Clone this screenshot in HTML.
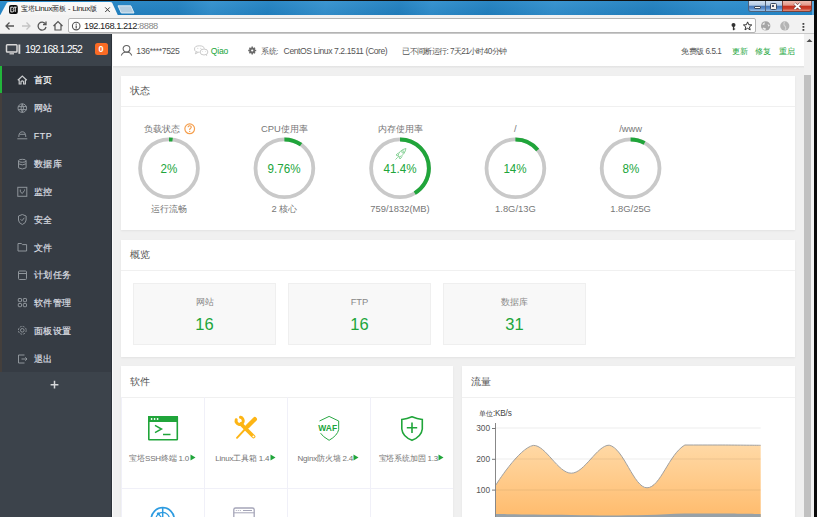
<!DOCTYPE html>
<html><head><meta charset="utf-8">
<style>
*{margin:0;padding:0;box-sizing:border-box}
html,body{width:817px;height:517px;overflow:hidden;background:#f0f0f0;font-family:"Liberation Sans",sans-serif}
.a{position:absolute}
.t{position:absolute;white-space:nowrap;line-height:1}
</style></head><body>
<!-- window chrome -->
<div class="a" style="left:0;top:0;width:817px;height:1px;background:#111"></div>
<div class="a" style="left:0;top:1px;width:814px;height:14px;background:linear-gradient(#2e8ecd,#2282c2)"></div>
<div class="a" style="left:0;top:1px;width:814px;height:14px;background:linear-gradient(100deg,rgba(0,0,0,0) 0%,rgba(0,30,60,.07) 22%,rgba(255,255,255,.06) 26%,rgba(0,30,60,.06) 33%,rgba(255,255,255,.07) 40%,rgba(0,30,60,.08) 49%,rgba(255,255,255,.05) 53%,rgba(0,30,60,.07) 60%,rgba(255,255,255,.06) 68%,rgba(0,30,60,.08) 80%,rgba(255,255,255,.04) 88%,rgba(0,0,0,0) 100%)"></div>
<div class="a" style="left:0;top:14.5px;width:814px;height:1px;background:rgba(10,60,100,.35)"></div>
<div class="a" style="left:814px;top:0;width:3px;height:517px;background:#0a0a0a"></div>
<!-- tab -->
<svg class="a" style="left:0;top:0" width="140" height="16"><defs><linearGradient id="tabg" x1="0" y1="0" x2="0" y2="1"><stop offset="0" stop-color="#fbfbfb"/><stop offset="1" stop-color="#f4f4f4"/></linearGradient></defs><path d="M0 15.5 L7 2.5 Q8 2 9 2 L110 2 Q111 2 112 2.5 L118 15.5 Z" fill="url(#tabg)"/><path d="M118 5.8 L130.8 5.8 L134 13 L121.3 13 Z" fill="#b3cde0" stroke="#e6f0f7" stroke-width="0.9"/></svg>
<svg class="a" style="left:9.4px;top:4.6px" width="9" height="9.2"><rect x="0" y="0" width="8.8" height="9" rx="2" fill="#0c0c0c"/><path d="M1.8 2.2 H3.6 Q4.6 2.2 4.6 3.4 Q4.6 4.3 3.8 4.5 Q4.8 4.7 4.8 5.7 Q4.8 6.9 3.6 6.9 H1.8 Z M4.9 2.2 H7.6 M6.25 2.2 V6.9" fill="none" stroke="#f4f4f4" stroke-width="0.95"/></svg>

<div class="t" style="left:20.8px;top:5.3px;font-size:7.4px;color:#222;letter-spacing:-0.05px">宝塔<span style="font-size:8px;letter-spacing:-0.35px">Linux</span>面板 - <span style="font-size:8px;letter-spacing:-0.35px">Linux</span>版</div>
<svg class="a" style="left:103px;top:5px" width="9" height="9"><path d="M2.2 2.4 L6.8 7 M6.8 2.4 L2.2 7" stroke="#333" stroke-width="0.95"/></svg>
<!-- window controls -->
<div class="a" style="left:747.5px;top:1px;width:35px;height:11px;background:linear-gradient(#d2e0f0 0%,#b6cce6 42%,#4677b6 52%,#5a8ccb 75%,#9cc2e8 100%);border:1px solid #50627a;border-top:none;border-radius:0 0 0 3px"></div>
<div class="a" style="left:765px;top:1px;width:1px;height:10.5px;background:#50627a"></div>
<div class="a" style="left:782px;top:1px;width:29.5px;height:11px;background:linear-gradient(#efbcb0 0%,#e3988a 42%,#c4301e 52%,#cc3f2c 75%,#e08f7c 100%);border:1px solid #7a4038;border-top:none;border-radius:0 0 3px 0"></div>
<div class="a" style="left:753.5px;top:6.2px;width:7.5px;height:3px;background:#fbf6f0;border:0.5px solid #3a4a60;border-radius:1px"></div>
<div class="a" style="left:769.5px;top:3px;width:7px;height:6.5px;background:#f4f0ea;border:0.5px solid #3a4a60;border-radius:1.5px"></div>
<div class="a" style="left:772.2px;top:5.4px;width:1.8px;height:1.8px;background:#1a2a50;border-radius:50%"></div>
<svg class="a" style="left:792px;top:1px" width="11" height="11"><path d="M2.5 2.5 L8.5 8 M8.5 2.5 L2.5 8" stroke="#5a3030" stroke-width="3"/><path d="M2.5 2.5 L8.5 8 M8.5 2.5 L2.5 8" stroke="#fff" stroke-width="1.7"/></svg>
<div class="a" style="left:811.5px;top:1px;width:2.5px;height:14px;background:#5aa7dc"></div>
<!-- toolbar -->
<div class="a" style="left:0;top:15px;width:814px;height:19px;background:#f2f2f2"></div>
<div class="a" style="left:0;top:33px;width:814px;height:1px;background:#c9c9c9"></div>
<svg class="a" style="left:0;top:16.2px" width="68" height="19">
<g fill="none" stroke="#555" stroke-width="1.3"><path d="M6 10 H14 M9.5 6.5 L6 10 L9.5 13.5"/></g>
<g fill="none" stroke="#c4c4c4" stroke-width="1.3"><path d="M22 10 H30 M26.5 6.5 L30 10 L26.5 13.5"/></g>
<g fill="none" stroke="#555" stroke-width="1.3"><path d="M45.5 8 A4 4 0 1 0 46 11"/><path d="M46 5.5 V8.5 H43" /></g>
<g fill="none" stroke="#555" stroke-width="1.2"><path d="M53.5 10 L58 5.5 L62.5 10 M55 9 V14 H61 V9"/></g>
</svg>
<div class="a" style="left:68.4px;top:18.2px;width:687.4px;height:15.2px;background:#fff;border:1px solid #b4b4b4;border-radius:2px"></div>
<svg class="a" style="left:70px;top:20px" width="13" height="13"><circle cx="6.2" cy="6.1" r="3.8" fill="none" stroke="#555" stroke-width="1.1"/><circle cx="6.2" cy="4.2" r="0.6" fill="#444"/><path d="M6.2 5.5 V8.4" stroke="#444" stroke-width="1.1"/></svg>

<div class="t" style="left:84px;top:22px;font-size:9.3px;color:#222;letter-spacing:-0.5px">192.168.1.212<span style="color:#888">:8888</span></div>
<svg class="a" style="left:728px;top:20px" width="90" height="14">
<g fill="#333"><circle cx="5.5" cy="5" r="2"/><rect x="4.9" y="5" width="1.3" height="5.2"/><rect x="4.9" y="8.5" width="2.3" height="1"/></g>
<path d="M19.60 1.90 L20.75 4.72 L23.78 4.94 L21.45 6.90 L22.19 9.86 L19.60 8.25 L17.01 9.86 L17.75 6.90 L15.42 4.94 L18.45 4.72 Z" fill="none" stroke="#333" stroke-width="1"/>
<circle cx="37.7" cy="5.9" r="4.7" fill="#a6a6a6"/><path d="M34.2 4.5 Q35.5 2.3 37 2.6 L36.2 5 Z M39.5 4 L41.8 5.2 L40.5 6.8 Z M35.5 7.5 L38 8.5 L37.3 10.3 Q35 9.8 34.5 8.3 Z" fill="#eee"/>
<circle cx="56.8" cy="5.9" r="4.6" fill="#b4b4b4"/><path d="M56.5 1.8 Q55 5 57.3 6.5 Q58.5 8 57 10" stroke="#d6d6d6" stroke-width="1.1" fill="none"/>
<g fill="#444"><rect x="74.5" y="3" width="1.8" height="1.8"/><rect x="74.5" y="6" width="1.8" height="1.8"/><rect x="74.5" y="9" width="1.8" height="1.8"/></g>
</svg>

<!-- sidebar -->
<div class="a" style="left:0;top:34px;width:112px;height:483px;background:#3c434b"></div>
<div class="a" style="left:0;top:66px;width:112px;height:306px;background:#363c44"></div>
<div class="a" style="left:0;top:66px;width:112px;height:27px;background:#2c3138"></div>
<div class="a" style="left:0;top:66px;width:1.8px;height:27px;background:#22b53b"></div>
<div class="a" style="left:0;top:93px;width:1.8px;height:279px;background:#443f3c"></div>
<div class="a" style="left:112px;top:34px;width:1.2px;height:483px;background:#fafafa"></div>
<div class="a" style="left:110.8px;top:34px;width:1.2px;height:483px;background:#2c3239"></div>

<!-- sidebar content -->
<svg class="a" style="left:5px;top:43px" width="17" height="12">
<rect x="1.5" y="1.7" width="10.5" height="7.3" rx="0.8" fill="none" stroke="#d8d8d8" stroke-width="1.5"/>
<path d="M4.5 10.8 H9" stroke="#d8d8d8" stroke-width="1.2"/>
<rect x="13.4" y="1.5" width="1.9" height="9.3" fill="#d8d8d8"/>
</svg>
<div class="t" style="left:25px;top:44.5px;font-size:10.4px;color:#fff;letter-spacing:-0.72px">192.168.1.252</div>
<div class="a" style="left:95.3px;top:42.8px;width:12.3px;height:12.3px;background:#fa6b24;border-radius:2.5px"></div>
<div class="t" style="left:98.6px;top:45px;font-size:9px;font-weight:bold;color:#fff">0</div>

<div class="t" style="left:33.8px;top:76.4px;font-size:8.9px;letter-spacing:0.5px;-webkit-text-stroke:0.2px #fff;color:#fff">首页</div>
<div class="t" style="left:33.8px;top:104.3px;font-size:8.9px;letter-spacing:0.5px;-webkit-text-stroke:0.2px #dcdfe2;color:#dcdfe2">网站</div>
<div class="t" style="left:33.8px;top:132.1px;font-size:8.9px;letter-spacing:0.5px;-webkit-text-stroke:0.2px #dcdfe2;color:#dcdfe2">FTP</div>
<div class="t" style="left:33.8px;top:160.0px;font-size:8.9px;letter-spacing:0.5px;-webkit-text-stroke:0.2px #dcdfe2;color:#dcdfe2">数据库</div>
<div class="t" style="left:33.8px;top:187.8px;font-size:8.9px;letter-spacing:0.5px;-webkit-text-stroke:0.2px #dcdfe2;color:#dcdfe2">监控</div>
<div class="t" style="left:33.8px;top:215.7px;font-size:8.9px;letter-spacing:0.5px;-webkit-text-stroke:0.2px #dcdfe2;color:#dcdfe2">安全</div>
<div class="t" style="left:33.8px;top:243.5px;font-size:8.9px;letter-spacing:0.5px;-webkit-text-stroke:0.2px #dcdfe2;color:#dcdfe2">文件</div>
<div class="t" style="left:33.8px;top:271.4px;font-size:8.9px;letter-spacing:0.5px;-webkit-text-stroke:0.2px #dcdfe2;color:#dcdfe2">计划任务</div>
<div class="t" style="left:33.8px;top:299.2px;font-size:8.9px;letter-spacing:0.5px;-webkit-text-stroke:0.2px #dcdfe2;color:#dcdfe2">软件管理</div>
<div class="t" style="left:33.8px;top:327.1px;font-size:8.9px;letter-spacing:0.5px;-webkit-text-stroke:0.2px #dcdfe2;color:#dcdfe2">面板设置</div>
<div class="t" style="left:33.8px;top:354.9px;font-size:8.9px;letter-spacing:0.5px;-webkit-text-stroke:0.2px #dcdfe2;color:#dcdfe2">退出</div>
<svg class="a" style="left:0;top:66px" width="40" height="310">
<path d="M17.8 14.3 L22.3 10 L26.8 14.3 M19.2 13 V18 H21 V15.6 Q22.3 14.3 23.6 15.6 V18 H25.4 V13" fill="none" stroke="#c9cbcd" stroke-width="1.2"/>
<g fill="none" stroke="#8f959b" stroke-width="1">
<circle cx="22.3" cy="42.1" r="4.3"/><path d="M18 40.6 H26.6 M18 43.6 H26.6 M22.3 37.8 Q19.8 42.1 22.3 46.4 Q24.8 42.1 22.3 37.8"/>
<path d="M18.8 71 Q18.8 65.8 22.3 65.8 Q25.8 65.8 25.8 71 M19.5 68.3 H25.1 M17.3 72.8 H27.3"/>
<ellipse cx="22.3" cy="94.8" rx="3.8" ry="1.5"/><path d="M18.5 94.8 V101.8 Q22.3 104.2 26.1 101.8 V94.8 M18.5 97.8 Q22.3 100 26.1 97.8"/>
<rect x="17.8" y="121.3" width="9" height="9"/><path d="M20.3 123.5 V125.8 L22.3 127.5 L24.5 124.5 V123.5"/>
<path d="M18.5 150 L22.3 148.5 L26.1 150 V154 Q26.1 157 22.3 158.5 Q18.5 157 18.5 154 Z"/><path d="M20.5 153.2 L22 154.7 L24.3 151.8"/>
<path d="M18 177.5 V185 H26.6 V178.6 H22.5 L21.3 177.5 Z"/>
<rect x="18.5" y="205" width="8" height="8.5" rx="1"/><path d="M18.5 207.5 H26.5"/>
<rect x="18.3" y="232.5" width="3.2" height="3.2" rx="0.6"/><rect x="23.3" y="232.5" width="3.2" height="3.2" rx="0.6"/><rect x="18.3" y="237.5" width="3.2" height="3.2" rx="0.6"/><rect x="23.3" y="237.5" width="3.2" height="3.2" rx="0.6"/>
<circle cx="22.3" cy="264.3" r="1.8"/><circle cx="22.3" cy="264.3" r="3.9" stroke-dasharray="1.9 1.15"/>
<path d="M24.5 289 H18.5 V297 H24.5 M21.5 293 H27 M25.3 291.3 L27 293 L25.3 294.7"/>
</g>
</svg>
<svg class="a" style="left:49px;top:379px" width="12" height="12"><path d="M5.5 1.8 V9.6 M1.6 5.7 H9.4" stroke="#d6d8da" stroke-width="1.5"/></svg>

<!-- header -->
<div class="a" style="left:113px;top:34px;width:691px;height:32px;background:#fff"></div>
<div class="a" style="left:113px;top:66px;width:691px;height:2px;background:linear-gradient(#e2e2e2,#ececec)"></div>
<svg class="a" style="left:120px;top:44px" width="140" height="14">
<g fill="none" stroke="#606060" stroke-width="1.05">
<circle cx="6.5" cy="4.8" r="3.4"/><path d="M1.3 11.5 Q2.5 8 6.5 8 Q10.5 8 11.7 11.5"/>
</g>
<g fill="none" stroke="#c4c4c4" stroke-width="0.9">
<path d="M79.5 8.3 Q74.5 8.3 74.5 5 Q74.5 1.8 79.3 1.8 Q84 1.8 84.3 4.6 M76.2 7.8 L75.3 9.8 L77.8 8.6"/>
<ellipse cx="84" cy="8" rx="3.9" ry="3"/><path d="M86 10.6 L86.8 11.8"/>
</g>
<g fill="#c4c4c4"><circle cx="77.8" cy="4.3" r="0.5"/><circle cx="80.8" cy="4.3" r="0.5"/><circle cx="82.6" cy="7.6" r="0.45"/><circle cx="85.4" cy="7.6" r="0.45"/></g>
<g fill="#6a6a6a"><circle cx="132.2" cy="6.5" r="3"/></g>
<g stroke="#6a6a6a" stroke-width="1.5"><path d="M132.2 2.5 V10.5 M128.2 6.5 H136.2 M129.4 3.7 L135 9.3 M135 3.7 L129.4 9.3"/></g>
<circle cx="132.2" cy="6.5" r="1.1" fill="#fff"/>
</svg>
<div class="t" style="left:136.3px;top:47px;font-size:8.6px;color:#555;letter-spacing:-0.33px">136****7525</div>
<div class="t" style="left:210.8px;top:47px;font-size:8.6px;color:#20a53a;letter-spacing:-0.2px">Qiao</div>
<div class="t" style="left:261.2px;top:48px;font-size:8px;color:#555;letter-spacing:-0.5px">系统:</div>
<div class="t" style="left:283.6px;top:47.2px;font-size:8.6px;color:#555;letter-spacing:-0.42px">CentOS Linux 7.2.1511 (Core)</div>
<div class="t" style="left:402.3px;top:48.2px;font-size:8.2px;color:#555;letter-spacing:-0.62px">已不间断运行: 7天21小时40分钟</div>
<div class="t" style="left:681px;top:48px;font-size:8.2px;color:#555;letter-spacing:-0.45px">免费版 6.5.1</div>
<div class="t" style="left:731.5px;top:48px;font-size:8px;color:#20a53a">更新</div>
<div class="t" style="left:755px;top:48px;font-size:8px;color:#20a53a">修复</div>
<div class="t" style="left:779px;top:48px;font-size:8px;color:#20a53a">重启</div>

<!-- scrollbar -->
<div class="a" style="left:804px;top:34px;width:10px;height:483px;background:#f1f1f1"></div>
<div class="a" style="left:804px;top:75px;width:7px;height:442px;background:#c1c1c1"></div>
<svg class="a" style="left:804px;top:36px" width="10" height="8"><path d="M2.5 6 L5.5 3 L8.5 6 Z" fill="#505050"/></svg>

<!-- status card -->
<div class="a" style="left:121px;top:76px;width:673.5px;height:154px;background:#fff;box-shadow:0 1px 2px rgba(0,0,0,.06)"></div>
<div class="a" style="left:121px;top:105.5px;width:673.5px;height:1px;background:#f0f0f0"></div>
<div class="t" style="left:130px;top:86px;font-size:10px;color:#555">状态</div>
<svg class="a" style="left:0;top:0" width="817" height="517">
<circle cx="169" cy="168.3" r="28.9" fill="none" stroke="#c9c9c9" stroke-width="3.8"/>
<circle cx="169" cy="168.3" r="28.9" fill="none" stroke="#20a53a" stroke-width="4" stroke-dasharray="3.63 181.58" transform="rotate(-90 169 168.3)"/>
<circle cx="284.4" cy="168.3" r="28.9" fill="none" stroke="#c9c9c9" stroke-width="3.8"/>
<circle cx="284.4" cy="168.3" r="28.9" fill="none" stroke="#20a53a" stroke-width="4" stroke-dasharray="17.72 181.58" transform="rotate(-90 284.4 168.3)"/>
<circle cx="400" cy="168.3" r="28.9" fill="none" stroke="#c9c9c9" stroke-width="3.8"/>
<circle cx="400" cy="168.3" r="28.9" fill="none" stroke="#20a53a" stroke-width="4" stroke-dasharray="75.18 181.58" transform="rotate(-90 400 168.3)"/>
<circle cx="515.4" cy="168.3" r="28.9" fill="none" stroke="#c9c9c9" stroke-width="3.8"/>
<circle cx="515.4" cy="168.3" r="28.9" fill="none" stroke="#20a53a" stroke-width="4" stroke-dasharray="25.42 181.58" transform="rotate(-90 515.4 168.3)"/>
<circle cx="630.6" cy="168.3" r="28.9" fill="none" stroke="#c9c9c9" stroke-width="3.8"/>
<circle cx="630.6" cy="168.3" r="28.9" fill="none" stroke="#20a53a" stroke-width="4" stroke-dasharray="14.53 181.58" transform="rotate(-90 630.6 168.3)"/>
</svg>
<div class="t" style="left:144px;top:124px;font-size:9.4px;color:#777">负载状态</div>
<div class="t" style="left:109px;width:120px;text-align:center;top:161.5px;font-size:13.5px;color:#20a53a;transform:scaleX(0.86)">2%</div>
<div class="t" style="left:109px;width:120px;text-align:center;top:204px;font-size:9.4px;color:#777">运行流畅</div>
<div class="t" style="left:224.39999999999998px;width:120px;text-align:center;top:124px;font-size:9.4px;color:#777">CPU使用率</div>
<div class="t" style="left:224.39999999999998px;width:120px;text-align:center;top:161.5px;font-size:13.5px;color:#20a53a;transform:scaleX(0.86)">9.76%</div>
<div class="t" style="left:224.39999999999998px;width:120px;text-align:center;top:204px;font-size:9.4px;color:#777">2 核心</div>
<div class="t" style="left:340px;width:120px;text-align:center;top:124px;font-size:9.4px;color:#777">内存使用率</div>
<div class="t" style="left:340px;width:120px;text-align:center;top:161.5px;font-size:13.5px;color:#20a53a;transform:scaleX(0.86)">41.4%</div>
<div class="t" style="left:340px;width:120px;text-align:center;top:204px;font-size:9.4px;color:#777">759/1832(MB)</div>
<div class="t" style="left:455.4px;width:120px;text-align:center;top:124px;font-size:9.4px;color:#777">/</div>
<div class="t" style="left:455.4px;width:120px;text-align:center;top:161.5px;font-size:13.5px;color:#20a53a;transform:scaleX(0.86)">14%</div>
<div class="t" style="left:455.4px;width:120px;text-align:center;top:204px;font-size:9.4px;color:#777">1.8G/13G</div>
<div class="t" style="left:570.6px;width:120px;text-align:center;top:124px;font-size:9.4px;color:#777">/www</div>
<div class="t" style="left:570.6px;width:120px;text-align:center;top:161.5px;font-size:13.5px;color:#20a53a;transform:scaleX(0.86)">8%</div>
<div class="t" style="left:570.6px;width:120px;text-align:center;top:204px;font-size:9.4px;color:#777">1.8G/25G</div>
<svg class="a" style="left:183px;top:122px" width="13" height="13"><circle cx="6.7" cy="6.8" r="4.85" fill="none" stroke="#f59f4e" stroke-width="1.2"/><path d="M5.1 5.3 Q5.1 3.7 6.7 3.7 Q8.3 3.7 8.3 5.1 Q8.3 6 7.3 6.5 Q6.7 6.9 6.7 7.7 V8" fill="none" stroke="#f39a45" stroke-width="1.1"/><circle cx="6.7" cy="9.4" r="0.65" fill="#f39a45"/></svg>
<svg class="a" style="left:393.3px;top:146px" width="16" height="16"><g fill="none" stroke="#7fce8e" stroke-width="0.9"><path d="M5 10 Q6 4 13 2.5 Q11.5 9.5 6 11 Z"/><path d="M5 10 L3 9 L5.5 6.8 M6 11 L7 13 L9.2 10.5 M4.7 11.3 L2.5 13.5"/><circle cx="9.8" cy="5.8" r="1.1"/></g></svg>

<div class="a" style="left:121px;top:240px;width:673.5px;height:117px;background:#fff;box-shadow:0 1px 2px rgba(0,0,0,.06)"></div>
<div class="a" style="left:121px;top:270px;width:673.5px;height:1px;background:#f0f0f0"></div>
<div class="t" style="left:130px;top:250px;font-size:10px;color:#555">概览</div>
<div class="a" style="left:133px;top:283px;width:143px;height:62px;background:#f8f8f8;border:1px solid #efefef"></div>
<div class="t" style="left:133px;width:143px;text-align:center;top:296.5px;font-size:9.4px;color:#888">网站</div>
<div class="t" style="left:133px;width:143px;text-align:center;top:315.5px;font-size:16.5px;color:#20a53a">16</div>
<div class="a" style="left:288px;top:283px;width:143px;height:62px;background:#f8f8f8;border:1px solid #efefef"></div>
<div class="t" style="left:288px;width:143px;text-align:center;top:296.5px;font-size:9.4px;color:#888">FTP</div>
<div class="t" style="left:288px;width:143px;text-align:center;top:315.5px;font-size:16.5px;color:#20a53a">16</div>
<div class="a" style="left:443px;top:283px;width:143px;height:62px;background:#f8f8f8;border:1px solid #efefef"></div>
<div class="t" style="left:443px;width:143px;text-align:center;top:296.5px;font-size:9.4px;color:#888">数据库</div>
<div class="t" style="left:443px;width:143px;text-align:center;top:315.5px;font-size:16.5px;color:#20a53a">31</div>

<div class="a" style="left:121px;top:366.2px;width:332px;height:160px;background:#fff;box-shadow:0 1px 2px rgba(0,0,0,.06)"></div>
<div class="a" style="left:121px;top:396.5px;width:332px;height:1px;background:#f0f0f0"></div>
<div class="t" style="left:130px;top:377px;font-size:10px;color:#555">软件</div>
<div class="a" style="left:121px;top:397px;width:1px;height:120px;background:#f0f0f8"></div>
<div class="a" style="left:204px;top:397px;width:1px;height:120px;background:#f0f0f8"></div>
<div class="a" style="left:287px;top:397px;width:1px;height:120px;background:#f0f0f8"></div>
<div class="a" style="left:370px;top:397px;width:1px;height:120px;background:#f0f0f8"></div>
<div class="a" style="left:121px;top:488px;width:332px;height:1px;background:#f0f0f8"></div>
<div class="t" style="left:121px;width:83px;text-align:center;top:454.2px;font-size:8px;color:#737373;letter-spacing:-0.2px">宝塔SSH终端 1.0<svg width="6" height="7" style="vertical-align:-0.5px;margin-left:0.5px"><path d="M0.5 0.5 L5.5 3.5 L0.5 6.5 Z" fill="#20a53a"/></svg></div>
<div class="t" style="left:204px;width:83px;text-align:center;top:454.2px;font-size:8px;color:#737373;letter-spacing:-0.2px">Linux工具箱 1.4<svg width="6" height="7" style="vertical-align:-0.5px;margin-left:0.5px"><path d="M0.5 0.5 L5.5 3.5 L0.5 6.5 Z" fill="#20a53a"/></svg></div>
<div class="t" style="left:287px;width:83px;text-align:center;top:454.2px;font-size:8px;color:#737373;letter-spacing:-0.2px">Nginx防火墙 2.4<svg width="6" height="7" style="vertical-align:-0.5px;margin-left:0.5px"><path d="M0.5 0.5 L5.5 3.5 L0.5 6.5 Z" fill="#20a53a"/></svg></div>
<div class="t" style="left:370px;width:83px;text-align:center;top:454.2px;font-size:8px;color:#737373;letter-spacing:-0.2px">宝塔系统加固 1.3<svg width="6" height="7" style="vertical-align:-0.5px;margin-left:0.5px"><path d="M0.5 0.5 L5.5 3.5 L0.5 6.5 Z" fill="#20a53a"/></svg></div>

<svg class="a" style="left:0;top:0" width="817" height="517">
<g>
<rect x="148.8" y="416.8" width="28.5" height="23" fill="none" stroke="#20a53a" stroke-width="1.6" rx="0.5"/>
<rect x="148" y="416" width="30" height="6" fill="#20a53a"/>
<circle cx="151.6" cy="419" r="0.9" fill="#fff"/><circle cx="154.6" cy="419" r="0.9" fill="#fff"/><circle cx="157.6" cy="419" r="0.9" fill="#fff"/>
<path d="M155 425.3 L161.5 429 L155 432.7" fill="none" stroke="#20a53a" stroke-width="1.5"/>
<path d="M163 434.5 H170.5" stroke="#20a53a" stroke-width="1.5"/>
</g>
<g fill="none" stroke="#fdb515" stroke-linecap="round">
<path d="M241 424 L253.5 436.5" stroke-width="3.8"/>
<path d="M236.2 419.8 A3.6 3.6 0 1 0 240.5 417.3" stroke-width="3"/>
<path d="M254.8 419.2 L247.5 426.5" stroke-width="4.4"/>
<path d="M247.5 426.5 L237 437.8" stroke-width="1.9"/>
</g>
<circle cx="253.4" cy="436.4" r="0.95" fill="#fff"/>
<path d="M319.5 421 L329.1 416.4 L338.7 421 L338.7 429.5 Q337.5 435.5 329.1 440.3 Q322.5 436.5 320.6 433.2" fill="none" stroke="#2aa845" stroke-width="1"/>
<text x="318.3" y="431.3" font-family="Liberation Sans" font-size="8.8" font-weight="bold" fill="#20a53a" textLength="18.8" lengthAdjust="spacingAndGlyphs">WAF</text>
<path d="M401.8 419.5 Q407 419 412 416.8 Q417 419 422.3 419.5 V429 Q421.5 436.5 412 440.3 Q402.5 436.5 401.8 429 Z" fill="none" stroke="#20a53a" stroke-width="1.6"/>
<path d="M412 422.5 V433 M406.8 427.7 H417.2" stroke="#20a53a" stroke-width="1.6"/>
<circle cx="162.7" cy="519.2" r="11.5" fill="none" stroke="#2d9be0" stroke-width="1.7"/>
<circle cx="162.7" cy="519.2" r="6.8" fill="none" stroke="#2d9be0" stroke-width="1.3"/>
<path d="M162.7 507.7 V519" stroke="#2d9be0" stroke-width="1.5"/>
<circle cx="158.3" cy="513.8" r="1.5" fill="#2d9be0"/>
<path d="M158.3 513.8 L162.7 519" stroke="#2d9be0" stroke-width="1.2"/>
<rect x="233.8" y="508" width="20.4" height="14" rx="1.8" fill="none" stroke="#a5a5b8" stroke-width="1.3"/>
<path d="M233.8 512.8 H254.2" stroke="#a5a5b8" stroke-width="1"/>
<g fill="#a5a5b8"><circle cx="236.3" cy="510.5" r="0.6"/><circle cx="238.3" cy="510.5" r="0.6"/><circle cx="240.3" cy="510.5" r="0.6"/></g>
<path d="M243 510.5 H252" stroke="#a5a5b8" stroke-width="1"/>
</svg>

<div class="a" style="left:462px;top:366.2px;width:332.5px;height:160px;background:#fff;box-shadow:0 1px 2px rgba(0,0,0,.06)"></div>
<div class="a" style="left:462px;top:396.5px;width:332.5px;height:1px;background:#f0f0f0"></div>
<div class="t" style="left:471px;top:377px;font-size:10px;color:#555">流量</div>
<div class="t" style="left:479px;top:410.1px;font-size:7.4px;color:#444">单位<span style="font-size:8.2px;letter-spacing:-0.2px">:KB/s</span></div>
<div class="t" style="left:460px;width:30px;text-align:right;top:424px;font-size:8.3px;color:#555">300</div>
<div class="t" style="left:460px;width:30px;text-align:right;top:455px;font-size:8.3px;color:#555">200</div>
<div class="t" style="left:460px;width:30px;text-align:right;top:486px;font-size:8.3px;color:#555">100</div>
<svg class="a" style="left:0;top:0" width="817" height="517">
<defs><linearGradient id="og" x1="0" y1="0" x2="0" y2="1"><stop offset="0" stop-color="#ffd9a6"/><stop offset="1" stop-color="#ffb866"/></linearGradient></defs>

<path d="M495.5 485.5 C495.5 485.5 519.1 447.7 533.4 445.4 C545.6 445.0 558.0 473.2 571.3 473.2 C584.5 473.2 597.2 445.0 609.2 445.2 C623.7 448.0 633.8 487.8 647.0 487.8 C660.3 487.8 669.0 454.0 684.9 445.0 C695.5 445.0 709.6 445.0 722.8 445.0 C736.1 445.1 760.7 445.3 760.7 445.3 L760.7 525 L495.5 525 Z" fill="url(#og)"/><path d="M495.5 485.5 C495.5 485.5 519.1 447.7 533.4 445.4 C545.6 445.0 558.0 473.2 571.3 473.2 C584.5 473.2 597.2 445.0 609.2 445.2 C623.7 448.0 633.8 487.8 647.0 487.8 C660.3 487.8 669.0 454.0 684.9 445.0 C695.5 445.0 709.6 445.0 722.8 445.0 C736.1 445.1 760.7 445.3 760.7 445.3" fill="none" stroke="#a0a0a0" stroke-width="1"/>
<path d="M495.5 514.0 C495.5 514.0 520.1 514.3 533.4 514.5 C546.6 514.7 558.0 514.8 571.3 515.0 C584.5 515.2 595.9 515.5 609.2 515.5 C622.4 515.5 633.8 515.3 647.0 515.0 C660.3 514.6 671.7 513.8 684.9 513.5 C698.2 513.5 709.6 513.5 722.8 513.5 C736.1 513.6 760.7 514.0 760.7 514.0 L760.7 525 L495.5 525 Z" fill="#97a1a8"/>
<g stroke="rgba(0,0,0,0.075)" stroke-width="1"><path d="M496 428 H760.7 M496 459 H760.7 M496 490 H760.7"/></g>
<path d="M495.5 423 V517" stroke="#888" stroke-width="1"/>
<g stroke="#777" stroke-width="1"><path d="M492 428.5 H495.5 M492 459.3 H495.5 M492 490.1 H495.5"/></g>
</svg>
</body></html>
